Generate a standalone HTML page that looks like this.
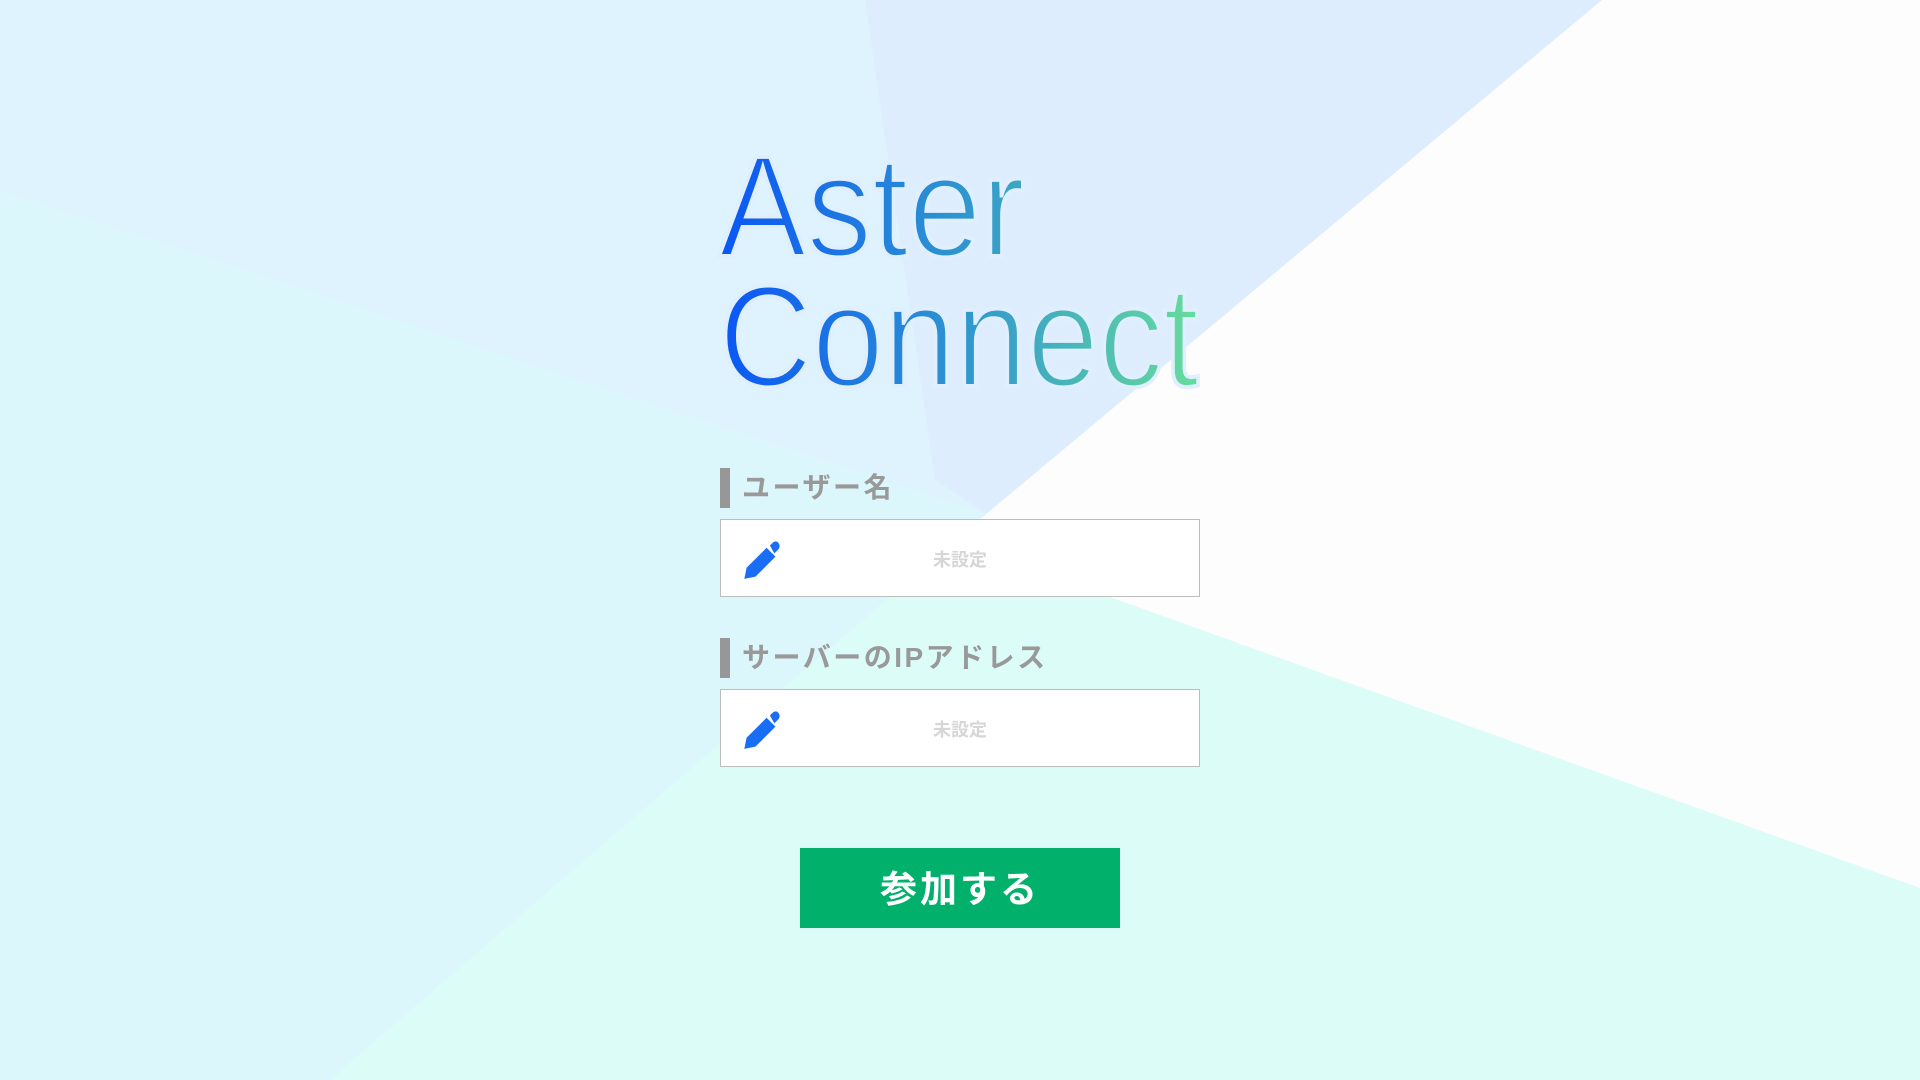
<!DOCTYPE html>
<html><head><meta charset="utf-8"><style>
html,body{margin:0;padding:0;width:1920px;height:1080px;overflow:hidden;font-family:"Liberation Sans","Noto Sans CJK JP",sans-serif}
.bg{position:absolute;left:0;top:0}
.lbl{position:absolute;left:720px;height:40px;border-left:10px solid #979797;padding-left:12px;font-size:28px;font-weight:bold;color:#999;line-height:40px;letter-spacing:2.5px}
.box{position:absolute;left:720px;width:478px;height:76px;background:#fff;border:1px solid #bdbdbd}
.ph{position:absolute;left:0;right:0;top:2px;line-height:76px;text-align:center;font-size:18px;font-weight:bold;color:#d6d6d6}
.pen{position:absolute;left:20px;top:20px}
.btn{position:absolute;left:800px;top:848px;width:320px;height:80px;background:#00b06b;color:#fff;font-size:37px;font-weight:bold;text-align:center;line-height:84px;letter-spacing:3px}
</style></head><body>
<svg class="bg" width="1920" height="1080">
<rect width="1920" height="1080" fill="#dcfcf8"/>
<polygon points="0,0 1602,0 986,514 0,190" fill="#def3fd"/>
<polygon points="0,190 986,514 330,1080 0,1080" fill="#dcf7fc"/>
<polygon points="865,0 1602,0 986,514 935,480" fill="#deedfd"/>
<polygon points="1602,0 1920,0 1920,888 954,541" fill="#fdfdfd"/>
</svg>
<svg style="position:absolute;left:0;top:0" width="1920" height="400">
<defs><linearGradient id="g" x1="720" y1="0" x2="1200" y2="0" gradientUnits="userSpaceOnUse">
<stop offset="0" stop-color="#0a57f5"/><stop offset="0.5" stop-color="#2f95d0"/><stop offset="1" stop-color="#66dd9c"/></linearGradient></defs>
<text x="719" y="256" font-size="144" fill="url(#g)" stroke="#dfeffd" stroke-width="4" textLength="306" lengthAdjust="spacingAndGlyphs" font-family="Liberation Sans, sans-serif">Aster</text>
<text x="719" y="386" font-size="144" fill="url(#g)" stroke="#dfeffd" stroke-width="4" textLength="480" lengthAdjust="spacingAndGlyphs" font-family="Liberation Sans, sans-serif">Connect</text>
</svg>
<div class="lbl" style="top:468px">ユーザー名</div>
<div class="box" style="top:519px"><svg class="pen" width="40" height="40" viewBox="0 0 36 36"><path d="M3 35 L5 25 L23 7 L31 15 L13 33 Z" fill="#1a6ef5"/><path d="M26 5 L29 2 Q32 0 34 3 Q36 6 33 9 L30 12 Z" fill="#1a6ef5"/></svg><div class="ph">未設定</div></div>
<div class="lbl" style="top:638px">サーバーのIPアドレス</div>
<div class="box" style="top:689px"><svg class="pen" width="40" height="40" viewBox="0 0 36 36"><path d="M3 35 L5 25 L23 7 L31 15 L13 33 Z" fill="#1a6ef5"/><path d="M26 5 L29 2 Q32 0 34 3 Q36 6 33 9 L30 12 Z" fill="#1a6ef5"/></svg><div class="ph">未設定</div></div>
<div class="btn">参加する</div>
</body></html>
